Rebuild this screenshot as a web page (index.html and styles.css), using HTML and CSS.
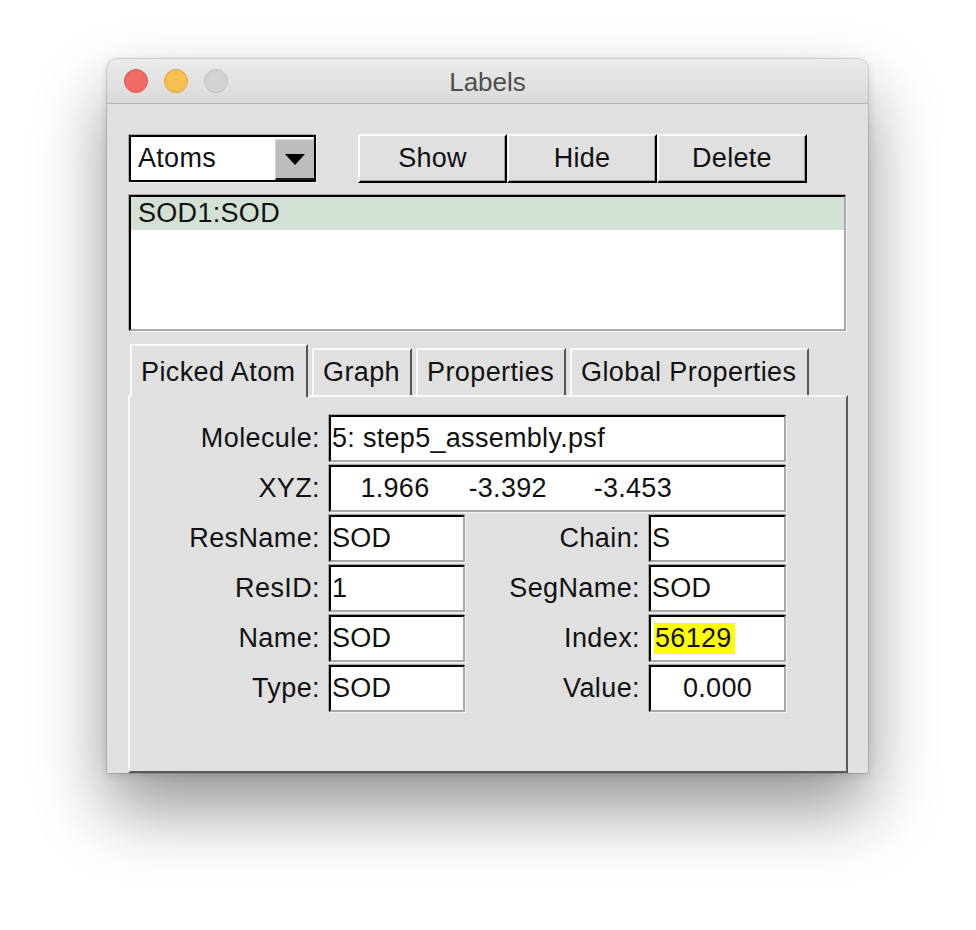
FILE: index.html
```html
<!DOCTYPE html>
<html>
<head>
<meta charset="utf-8">
<title>Labels</title>
<link rel="stylesheet" href="styles.css">
</head>
<body>
<div class="page">
  <div class="window">
    <div class="titlebar">
      <div class="lights">
        <span class="light red"></span>
        <span class="light yellow"></span>
        <span class="light grey"></span>
      </div>
      <div class="title">Labels</div>
      <div></div>
    </div>
    <div class="content">
      <div class="toolbar">
        <div class="combo">
          <span class="combo-text">Atoms</span>
          <span class="combo-btn"><svg width="20" height="11" viewBox="0 0 20 11"><polygon points="0,0 20,0 10,11" fill="#000"/></svg></span>
        </div>
        <div class="buttons">
          <button class="btn btn-show">Show</button>
          <button class="btn">Hide</button>
          <button class="btn">Delete</button>
        </div>
      </div>
      <div class="listbox">
        <div class="list-item selected">SOD1:SOD</div>
      </div>
      <div class="tabs">
        <div class="tab tab-selected tab-picked">Picked Atom</div>
        <div class="tab tab-graph">Graph</div>
        <div class="tab tab-props">Properties</div>
        <div class="tab tab-global">Global Properties</div>
      </div>
      <div class="panel">
        <div class="form">
          <div class="label">Molecule:</div>
          <div class="field wide">5: step5_assembly.psf</div>

          <div class="label">XYZ:</div>
          <div class="field wide pre">   1.966     -3.392      -3.453</div>

          <div class="label">ResName:</div>
          <div class="field">SOD</div>
          <div class="label">Chain:</div>
          <div class="field">S</div>

          <div class="label">ResID:</div>
          <div class="field">1</div>
          <div class="label">SegName:</div>
          <div class="field">SOD</div>

          <div class="label">Name:</div>
          <div class="field">SOD</div>
          <div class="label">Index:</div>
          <div class="field"><span class="highlight">56129</span></div>

          <div class="label">Type:</div>
          <div class="field">SOD</div>
          <div class="label">Value:</div>
          <div class="field center">0.000</div>
        </div>
      </div>
    </div>
  </div>
</div>
</body>
</html>
```
FILE: styles.css
```css
* { box-sizing: border-box; }

html, body {
  margin: 0;
  background: #ffffff;
}

body {
  font-family: "Liberation Sans", Arial, sans-serif;
  color: #111;
}

.page {
  height: 930px;
  padding: 59px 0 0 107px;
}

.window {
  width: 761px;
  height: 714px;
  background: #e0e0e0;
  border-radius: 10px 10px 0 0;
  box-shadow: 0 0 0 1px rgba(0, 0, 0, 0.12), 0 2px 10px rgba(0, 0, 0, 0.12), 0 36px 70px rgba(0, 0, 0, 0.42);
  overflow: hidden;
  display: flex;
  flex-direction: column;
}

.titlebar {
  height: 45px;
  border-bottom: 1px solid #b4b4b4;
  background: linear-gradient(#ebebeb, #d9d9d9);
  display: grid;
  grid-template-columns: 1fr auto 1fr;
  align-items: center;
}

.lights {
  display: flex;
  gap: 16px;
  padding-left: 17px;
}

.light {
  width: 24px;
  height: 24px;
  border-radius: 50%;
  border: 1px solid;
}

.red { background: #ee6b60; border-color: #d6574d; }
.yellow { background: #f6bf4f; border-color: #dba542; }
.grey { background: #d2d2d2; border-color: #c0c0c0; }

.title {
  font-size: 26px;
  color: #4d4d4d;
  padding-top: 3px;
}

.content {
  padding: 30px 20px 0 21px;
  display: flex;
  flex-direction: column;
}

.toolbar {
  display: flex;
  align-items: center;
  height: 49px;
}

.combo {
  width: 187px;
  height: 47px;
  margin-left: 1px;
  display: flex;
  border: 2px solid #000;
  background: #fff;
  box-shadow: -1px -1px 0 #a8a8a8, 1px 1px 0 #f6f6f6;
}

.combo-text {
  flex: 1;
  font-size: 27px;
  line-height: 43px;
  padding-left: 7px;
  letter-spacing: 0.3px;
}

.combo-btn {
  width: 39px;
  margin-top: 2px;
  background: #bdbdbd;
  border-top: 1px solid #d8d8d8;
  border-left: 1px solid #d8d8d8;
  border-bottom: 2px solid #1a1a1a;
  display: flex;
  align-items: center;
  justify-content: center;
}

.buttons {
  display: flex;
  margin-left: 42px;
}

.btn {
  width: 150px;
  height: 49px;
  padding: 0;
  background: #e0e0e0;
  border-style: solid;
  border-width: 2px;
  border-color: #fafafa #000 #000 #fafafa;
  box-shadow: inset -1px -1px 0 #a0a0a0;
  font-family: "Liberation Sans", Arial, sans-serif;
  font-size: 27px;
  letter-spacing: 0.3px;
  color: #111;
}

.btn-show { width: 149px; }

.listbox {
  margin-top: 12px;
  margin-left: 1px;
  width: 717px;
  height: 136px;
  background: #fff;
  border-style: solid;
  border-width: 2px;
  border-color: #000 #a8a8a8 #a8a8a8 #000;
  box-shadow: -1px -1px 0 #a8a8a8, 1px 1px 0 #f4f4f4;
}

.list-item {
  height: 33px;
  line-height: 33px;
  font-size: 27px;
  padding-left: 7px;
  letter-spacing: 0.3px;
}

.list-item.selected {
  background: #d3e0d4;
}

.tabs {
  margin-top: 13px;
  margin-left: 2px;
  height: 51px;
  display: flex;
  align-items: flex-start;
  gap: 4px;
  position: relative;
  z-index: 1;
}

.tab {
  margin-top: 4px;
  height: 47px;
  background: #e0e0e0;
  border-top: 2px solid #f8f8f8;
  border-left: 2px solid #f8f8f8;
  border-right: 2px solid #555;
  padding-left: 9px;
  font-size: 27px;
  line-height: 45px;
  letter-spacing: 0.4px;
  white-space: nowrap;
}

.tab-selected {
  margin-top: 0;
  height: 53px;
  padding-top: 4px;
  padding-left: 9px;
}

.tab-picked { width: 178px; }
.tab-graph { width: 100px; }
.tab-props { width: 150px; }
.tab-global { width: 239px; }

.panel {
  height: 378px;
  border-top: 2px solid #f8f8f8;
  border-left: 2px solid #f8f8f8;
  border-right: 2px solid #5a5a5a;
  border-bottom: 2px solid #5a5a5a;
}

.form {
  padding-top: 18px;
  display: grid;
  grid-template-columns: 199px 136px 184px 137px;
  grid-auto-rows: 47px;
  row-gap: 3px;
}

.label {
  text-align: right;
  padding-right: 9px;
  font-size: 27px;
  line-height: 47px;
  letter-spacing: 0.4px;
  white-space: nowrap;
}

.field {
  background: #fff;
  border-style: solid;
  border-width: 2px;
  border-color: #000 #a8a8a8 #a8a8a8 #000;
  box-shadow: -1px -1px 0 #a8a8a8, 1px 1px 0 #f4f4f4;
  font-size: 27px;
  line-height: 43px;
  padding-left: 1px;
  letter-spacing: 0.3px;
  white-space: nowrap;
  overflow: hidden;
}

.field.wide { grid-column: 2 / 5; }
.field.pre { white-space: pre; padding-left: 6px; }
.field.center { text-align: center; padding-left: 0; }

.highlight {
  display: inline-block;
  background: #ffff00;
  line-height: 31px;
  margin-left: 2px;
  padding: 0 3px 0 1px;
  vertical-align: middle;
  position: relative;
  top: -1px;
}
```
